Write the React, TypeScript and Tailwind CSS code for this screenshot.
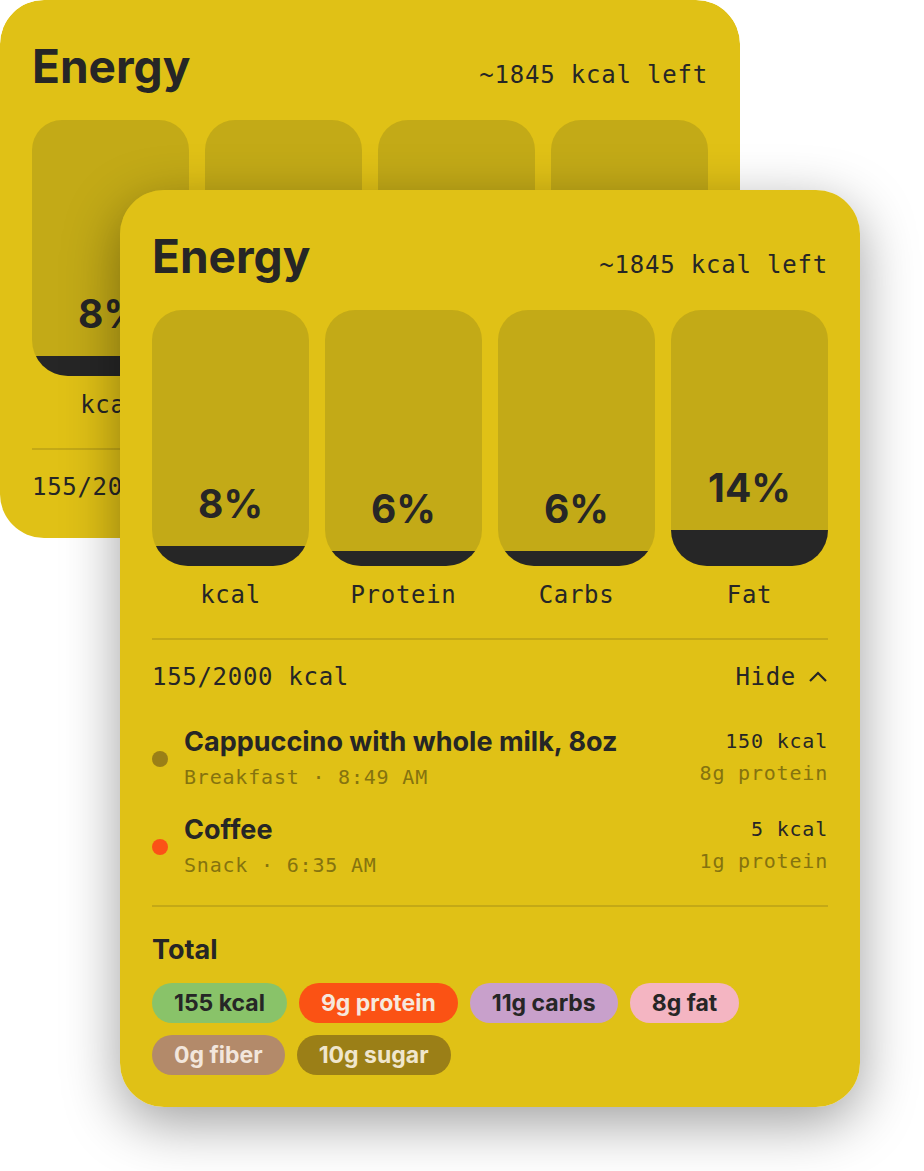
import React from "react";

const mono = "font-['DejaVu_Sans_Mono',monospace]";
const sans = "font-['Inter',sans-serif]";

const macros = [
  { label: "kcal", pct: 8 },
  { label: "Protein", pct: 6 },
  { label: "Carbs", pct: 6 },
  { label: "Fat", pct: 14 },
];

const entries = [
  {
    name: "Cappuccino with whole milk, 8oz",
    meal: "Breakfast · 8:49 AM",
    kcal: "150 kcal",
    protein: "8g protein",
    dot: "bg-[#9a7f17]",
  },
  {
    name: "Coffee",
    meal: "Snack · 6:35 AM",
    kcal: "5 kcal",
    protein: "1g protein",
    dot: "bg-[#fb5217]",
  },
];

const totals = [
  { text: "155 kcal", cls: "bg-[#89c369] text-[#262626]" },
  { text: "9g protein", cls: "bg-[#fb5214] text-[#f6e8dc]" },
  { text: "11g carbs", cls: "bg-[#c8a0cb] text-[#262626]" },
  { text: "8g fat", cls: "bg-[#f4b5c2] text-[#262626]" },
  { text: "0g fiber", cls: "bg-[#b38a6a] text-[#f2e6dc]" },
  { text: "10g sugar", cls: "bg-[#9b7f17] text-[#f0e6cc]" },
];

const EnergyCard = () => (
  <div className="w-[740px] h-[917px] rounded-[44px] bg-[#e0c116] px-8 pt-[44px] pb-8 text-[#262626]">
    {/* Header */}
    <div className="flex h-[45px] items-baseline justify-between">
      <h1 className={`${sans} text-[46px] leading-[45px] font-bold`}>Energy</h1>
      <span className={`${mono} text-[24px] leading-7 tracking-[0.8px]`}>~1845 kcal left</span>
    </div>

    {/* Macro bars */}
    <div className="mt-[31px] grid grid-cols-4 gap-4">
      {macros.map((m) => (
        <div key={m.label} className="flex flex-col items-center">
          <div className="h-[256px] w-full rounded-t-[30px] rounded-b-[36px] bg-[#c3aa17] overflow-hidden flex flex-col justify-end items-center">
            <span className={`${sans} text-[39px] leading-none font-bold mb-[23px]`}>
              {m.pct}%
            </span>
            <div className="w-full bg-[#262626]" style={{ height: `${m.pct}%` }} />
          </div>
          <span className={`${mono} mt-[15px] text-[24px] leading-7 tracking-[0.7px]`}>
            {m.label}
          </span>
        </div>
      ))}
    </div>

    <div className="mt-[29px] h-[2px] bg-[#c4a916]" />

    {/* Summary */}
    <div className={`${mono} mt-[23px] flex items-center justify-between text-[24px] leading-7 tracking-[0.7px]`}>
      <span>155/2000 kcal</span>
      <button className="flex items-center gap-3">
        <span>Hide</span>
        <svg width="20" height="12" viewBox="0 0 20 12" fill="none">
          <path d="M2 10 10 2l8 8" stroke="#262626" strokeWidth="2.2" />
        </svg>
      </button>
    </div>

    {/* Logged foods */}
    <div className="mt-[35px] flex flex-col gap-[23px]">
      {entries.map((e) => (
        <div key={e.name} className="flex items-start justify-between">
          <div className="flex items-center gap-4">
            <span className={`w-4 h-4 rounded-full ${e.dot}`} />
            <div className="flex flex-col">
              <span className={`${sans} text-[27px] leading-8 font-bold`}>{e.name}</span>
              <span className={`${mono} mt-[5px] text-[20px] leading-7 tracking-[0.8px] text-[#85730f]`}>
                {e.meal}
              </span>
            </div>
          </div>
          <div className={`${mono} flex flex-col items-end text-[20px] leading-7 tracking-[0.8px] pt-[1px]`}>
            <span>{e.kcal}</span>
            <span className="mt-1 text-[#85730f]">{e.protein}</span>
          </div>
        </div>
      ))}
    </div>

    <div className="mt-[26px] h-[2px] bg-[#c4a916]" />

    {/* Totals */}
    <h2 className={`${sans} mt-[27px] text-[27px] leading-8 font-bold`}>Total</h2>
    <div className="mt-[17px] flex flex-wrap gap-3 w-[640px]">
      {totals.map((t) => (
        <span
          key={t.text}
          className={`${sans} h-10 px-[22px] rounded-full flex items-center text-[23px] font-bold ${t.cls}`}
        >
          {t.text}
        </span>
      ))}
    </div>
  </div>
);

export default function App() {
  return (
    <div className="relative w-[924px] h-[1171px] bg-white overflow-hidden">
      <div className="w-[740px] h-[538px] rounded-[44px] overflow-hidden">
        <EnergyCard />
      </div>
      <div className="absolute left-[120px] top-[190px] rounded-[44px] shadow-[0_16px_56px_rgba(0,0,0,0.38)]">
        <EnergyCard />
      </div>
    </div>
  );
}
